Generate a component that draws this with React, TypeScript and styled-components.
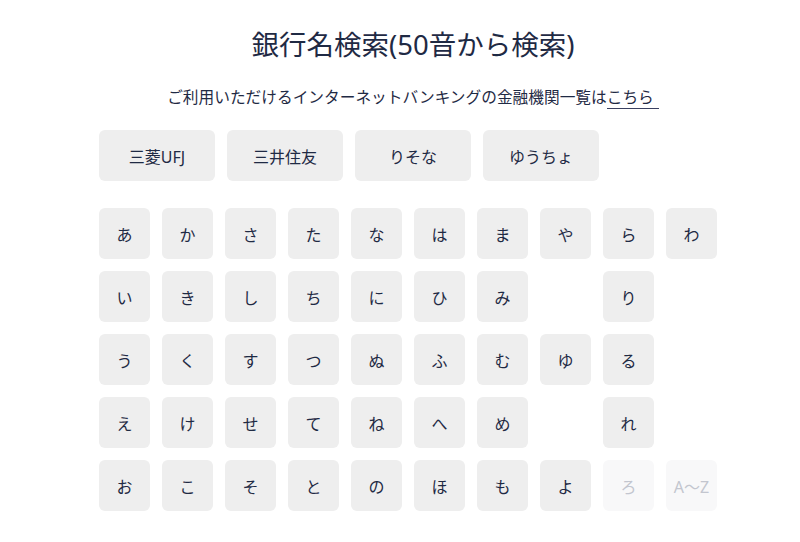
import React from 'react';
import styled, { createGlobalStyle } from 'styled-components';

const GlobalStyle = createGlobalStyle`
  body {
    margin: 0;
    background: #ffffff;
    font-family: "Noto Sans", "Noto Sans CJK JP", sans-serif;
    color: #1f2a44;
  }
`;

const Page = styled.div`
  padding-left: 16px;
`;

const Content = styled.main`
  width: 618px;
  margin: 0 auto;
  display: flex;
  flex-direction: column;
  align-items: center;
`;

const Header = styled.header`
  display: flex;
  flex-direction: column;
  align-items: center;
  padding-left: 10px;
`;

const Title = styled.h1`
  margin: 25px 0 0;
  font-size: 27.5px;
  line-height: 40px;
  font-weight: 400;
  color: #1f2a44;
`;

const Lead = styled.p`
  margin: 20px 0 0;
  font-size: 15.7px;
  line-height: 24px;
  color: #1f2a44;
`;

const LeadLink = styled.a`
  display: inline-block;
  line-height: 21px;
  padding-right: 5px;
  border-bottom: 1px solid #3a4060;
  color: inherit;
  text-decoration: none;
`;

const BankRow = styled.div`
  align-self: stretch;
  display: flex;
  gap: 12px;
  margin-top: 21px;
`;

const BankButton = styled.button`
  width: 116px;
  height: 51px;
  border: none;
  border-radius: 6px;
  background: #eeeeee;
  font-family: inherit;
  font-size: 16px;
  color: #1f2a44;
  cursor: pointer;
`;

const KanaGrid = styled.div`
  align-self: stretch;
  display: grid;
  grid-template-columns: repeat(10, 51px);
  grid-auto-rows: 51px;
  gap: 12px;
  margin-top: 27px;
`;

const KanaButton = styled.button<{ $disabled?: boolean }>`
  border: none;
  border-radius: 6px;
  background: ${(p) => (p.$disabled ? '#f8f8f9' : '#eeeeee')};
  color: ${(p) => (p.$disabled ? '#c3c6cf' : '#1f2a44')};
  font-family: inherit;
  font-size: 16px;
  padding: 0;
  cursor: ${(p) => (p.$disabled ? 'default' : 'pointer')};
`;

const Blank = styled.div``;

const banks = ['三菱UFJ', '三井住友', 'りそな', 'ゆうちょ'];

const rows: (string | null)[][] = [
  ['あ', 'か', 'さ', 'た', 'な', 'は', 'ま', 'や', 'ら', 'わ'],
  ['い', 'き', 'し', 'ち', 'に', 'ひ', 'み', null, 'り', null],
  ['う', 'く', 'す', 'つ', 'ぬ', 'ふ', 'む', 'ゆ', 'る', null],
  ['え', 'け', 'せ', 'て', 'ね', 'へ', 'め', null, 'れ', null],
  ['お', 'こ', 'そ', 'と', 'の', 'ほ', 'も', 'よ', 'ろ', 'A〜Z'],
];

const disabledKeys = ['ろ', 'A〜Z'];

const App: React.FC = () => {
  return (
    <>
      <GlobalStyle />
      <Page>
        <Content>
          <Header>
            <Title>銀行名検索(50音から検索)</Title>
            <Lead>
              ご利用いただけるインターネットバンキングの金融機関一覧は
              <LeadLink href="#">こちら</LeadLink>
            </Lead>
          </Header>
          <BankRow>
            {banks.map((b) => (
              <BankButton key={b}>{b}</BankButton>
            ))}
          </BankRow>
          <KanaGrid>
            {rows.flat().map((k, i) =>
              k ? (
                <KanaButton key={i} $disabled={disabledKeys.includes(k)}>
                  {k}
                </KanaButton>
              ) : (
                <Blank key={i} />
              )
            )}
          </KanaGrid>
        </Content>
      </Page>
    </>
  );
};

export default App;
